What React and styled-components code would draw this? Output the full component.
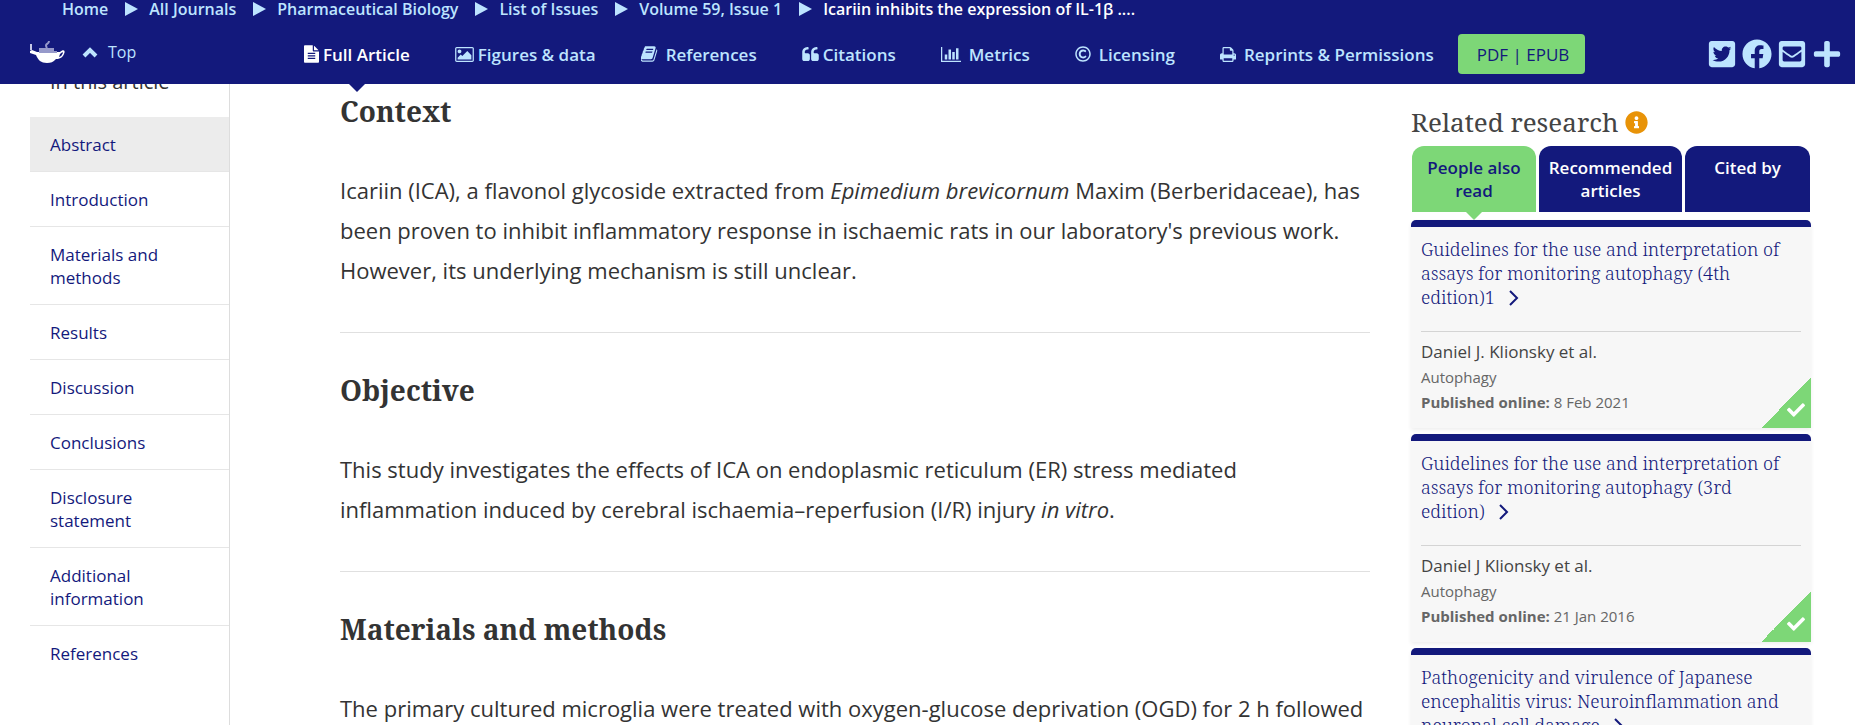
import React from "react";
import styled, { createGlobalStyle } from "styled-components";
import {
  FaRegCopyright,
  FaTwitterSquare,
  FaFacebook,
  FaEnvelopeSquare,
  FaPlus,
  FaInfoCircle,
  FaCheck,
} from "react-icons/fa";

const navy = "#13197c";
const sky = "#bde4ff";
const green = "#7dd777";
const sans = `"Open Sans", "Noto Sans", sans-serif`;
const serif = `"Noto Serif", "Droid Serif", "Liberation Serif", serif`;

const GlobalStyle = createGlobalStyle`
  *, *::before, *::after { box-sizing: border-box; }
  html, body { height: 100%; }
  body {
    margin: 0;
    overflow: hidden;
    background: #fff;
    color: #333;
    font-family: ${sans};
    font-size: 17px;
  }
  #root { height: 100%; }
  a { color: inherit; text-decoration: none; }
  h2, h3, p, ul, ol { margin: 0; padding: 0; }
  ul, ol { list-style: none; }
  button { font: inherit; border: 0; cursor: pointer; }
  svg { display: block; flex: none; }
`;

const Page = styled.div`
  display: flex;
  flex-direction: column;
  height: 100%;
`;

const Header = styled.header`
  flex: none;
  background: ${navy};
  color: ${sky};
`;

const Breadcrumbs = styled.ol`
  display: flex;
  align-items: center;
  padding-left: 62px;
  font-size: 16px;
  font-weight: 600;
  line-height: 18px;
  white-space: nowrap;
`;

const Crumb = styled.li`
  display: flex;
  align-items: center;
  color: ${(p) => (p.$current ? "#fff" : sky)};

  &:not(:first-child)::before {
    content: "";
    margin: 0 11px 0 17px;
    border-left: 13px solid ${sky};
    border-top: 7px solid transparent;
    border-bottom: 7px solid transparent;
  }
`;

const NavBar = styled.div`
  display: flex;
  align-items: center;
  height: 66px;
  padding: 6px 13px 0 29px;
  white-space: nowrap;
`;

const BrandGroup = styled.div`
  display: flex;
  align-items: center;
  gap: 16px;
  width: 275px;
  padding-bottom: 4px;
`;

const TopLink = styled.a`
  display: flex;
  align-items: center;
  gap: 10px;
  font-size: 16px;
`;

const NavList = styled.ul`
  display: flex;
  align-items: center;
  gap: 45px;
  height: 60px;
  font-weight: 600;
`;

const NavLink = styled.a`
  position: relative;
  display: flex;
  align-items: center;
  gap: ${(p) => (p.$tight ? "4px" : "8px")};
  height: 60px;
  color: ${(p) => (p.$active ? "#fff" : sky)};

  &::after {
    content: "";
    display: ${(p) => (p.$active ? "block" : "none")};
    position: absolute;
    left: 50%;
    top: 100%;
    margin-left: -8px;
    border-top: 8px solid ${navy};
    border-left: 8px solid transparent;
    border-right: 8px solid transparent;
  }
`;

const PdfButton = styled.button`
  height: 40px;
  margin-left: 24px;
  padding: 0 16px 0 19px;
  border-radius: 4px;
  background: ${green};
  color: ${navy};
`;

const SocialList = styled.ul`
  display: flex;
  align-items: center;
  gap: 5px;
  margin-left: auto;
  font-size: 30px;
`;

const Body = styled.div`
  flex: 1;
  min-height: 0;
  display: grid;
  grid-template-columns: 230px minmax(0, 1fr) 400px;
  padding-right: 44px;
  overflow: hidden;
`;

const Sidebar = styled.nav`
  margin-left: 30px;
  border-right: 1px solid #ddd;
  overflow: hidden;
`;

const SidebarTitle = styled.h2`
  margin-top: -14px;
  padding: 0 20px;
  font-size: 20px;
  font-weight: 500;
  line-height: 24px;
`;

const SectionList = styled.ul`
  margin-top: 23px;
`;

const SectionItem = styled.li`
  border-bottom: 1px solid #e6e6e6;
  background: ${(p) => (p.$active ? "#ececec" : "transparent")};

  &:last-child { border-bottom: 0; }
`;

const SectionLink = styled.a`
  display: block;
  padding: 16px 20px 15px;
  font-weight: 500;
  line-height: 23px;
  color: ${navy};
`;

const Article = styled.main`
  padding: 0 41px 0 110px;
  overflow: hidden;
`;

const Section = styled.section`
  padding: ${(p) => (p.$first ? "7px" : "37px")} 0 42px;
  border-bottom: 1px solid #e0e0e0;
`;

const SectionHeading = styled.h3`
  font-family: ${serif};
  font-size: 28px;
  font-weight: 700;
  line-height: 40px;
`;

const Paragraph = styled.p`
  margin-top: 39px;
  font-size: 22px;
  font-weight: 400;
  line-height: 40px;
`;

const Related = styled.aside`
  padding-top: 18px;
`;

const RelatedHeading = styled.h2`
  display: flex;
  align-items: center;
  gap: 7px;
  height: 44px;
  padding-bottom: 4px;
  font-family: ${serif};
  font-size: 26px;
  font-weight: 400;
  color: #444;
  white-space: nowrap;

  svg { color: #e89308; font-size: 23px; }
`;

const Tabs = styled.div`
  display: grid;
  grid-template-columns: 124fr 143fr 125fr;
  gap: 3px;
  padding: 0 1px;
`;

const Tab = styled.button`
  position: relative;
  display: flex;
  justify-content: center;
  align-items: flex-start;
  height: 66px;
  padding: 10px 8px;
  border-radius: 12px 12px 0 0;
  background: ${(p) => (p.$active ? green : navy)};
  color: ${(p) => (p.$active ? navy : "#fff")};
  font-weight: 600;
  line-height: 23px;

  &::after {
    content: "";
    display: ${(p) => (p.$active ? "block" : "none")};
    position: absolute;
    left: 50%;
    top: 100%;
    margin-left: -8px;
    border-top: 8px solid ${green};
    border-left: 8px solid transparent;
    border-right: 8px solid transparent;
  }
`;

const CardList = styled.div`
  display: flex;
  flex-direction: column;
  gap: 6px;
  margin-top: 8px;
`;

const Card = styled.article`
  position: relative;
  height: 208px;
  padding: 10px 10px 0;
  border-top: 7px solid ${navy};
  border-radius: 5px 5px 0 0;
  background: #f7f7f7;
  box-shadow: 0 2px 4px #eee;
`;

const CardTitle = styled.h3`
  height: 95px;
  border-bottom: 1px solid #d4d4d4;
  color: ${navy};
  font-family: ${serif};
  font-size: 18px;
  font-weight: 325;
  line-height: 24px;

  svg { display: inline-block; margin-left: 10px; vertical-align: -2px; }
`;

const Author = styled.p`
  margin-top: 6px;
  line-height: 27px;
  color: #444;
`;

const Meta = styled.p`
  font-size: 15px;
  line-height: 25px;
  color: #666;
`;

const Corner = styled.span`
  position: absolute;
  right: 0;
  bottom: 0;
  display: flex;
  align-items: flex-end;
  justify-content: flex-end;
  width: 50px;
  height: 50px;
  padding: 0 6px 9px 0;
  background: linear-gradient(135deg, transparent 50%, ${green} 50%);
  color: #fff;
  font-size: 18px;
`;

const quote =
  "v384q0 80-56 136t-136 56h-384q-80 0-136-56t-56-136v-704q0-104 40.500-198.500t109.500-163.500 163.500-109.500 198.500-40.500h64q26 0 45 19t19 45v128q0 26-19 45t-45 19h-64q-106 0-181 75t-75 181v32q0 40 28 68t68 28h224q80 0 136 56t56 136z";
const textLine = "v-64q0-14-9-23t-23-9h-704q-14 0-23 9t-9 23v64q0 14 9 23t23 9h704q14 0 23-9t9-23z";

const glyphs = {
  file: {
    box: "128 0 1536 1792",
    w: 15,
    h: 18,
    d: `M1596 476q14 14 28 36h-472v-472q22 14 36 28zm-476 164h544v1056q0 40-28 68t-68 28h-1344q-40 0-68-28t-28-68v-1600q0-40 28-68t68-28h800v544q0 40 28 68t68 28zM1280 1376${textLine}M1280 1120${textLine}M1280 864${textLine}`,
  },
  image: {
    box: "-64 128 1920 1536",
    w: 19,
    h: 15,
    d: "M576 576q0 80-56 136t-136 56-136-56-56-136 56-136 136-56 136 56 56 136zm1024 384v448h-1408v-192l320-320 160 160 512-512zm96-704h-1600q-13 0-22.500 9.500t-9.500 22.500v1216q0 13 9.500 22.500t22.500 9.500h1600q13 0 22.500-9.500t9.500-22.500v-1216q0-13-9.500-22.500t-22.500-9.500zm160 32v1216q0 66-47 113t-113 47h-1600q-66 0-113-47t-47-113v-1216q0-66 47-113t113-47h1600q66 0 113 47t47 113z",
  },
  book: {
    box: "56 128 1680 1536",
    w: 17,
    h: 16,
    d: "M1639 478q40 57 18 129l-275 906q-19 64-76.500 107.500t-122.500 43.500h-923q-77 0-148.500-53.500t-99.500-131.500q-24-67-2-127 0-4 3-27t4-37q1-8-3-21.500t-3-19.500q2-11 8-21t16.500-23.500 16.500-23.500q23-38 45-91.500t30-91.500q3-10 .5-30t-.5-28q3-11 17-28t17-23q21-36 42-92t25-90q1-9-2.500-32t.5-28q4-13 22-30.500t22-22.500q19-26 42.500-84.500t27.500-96.500q1-8-3-25.500t-2-26.500q2-8 9-18t18-23 17-21q8-12 16.500-30.500t15-35 16-36 19.500-32 26.500-23.500 36-11.500 47.500 5.500l-1 3q38-9 51-9h761q74 0 114 56t18 130l-274 906q-36 119-71.500 153.500t-128.500 34.500h-869q-27 0-38 15-11 16-1 43 24 70 144 70h923q29 0 56-15.500t35-41.500l300-987q7-22 5-57 38 15 59 43zm-1064 2q-4 13 2 22.500t20 9.500h608q13 0 25.500-9.500t16.500-22.500l21-64q4-13-2-22.500t-20-9.500h-608q-13 0-25.500 9.500t-16.500 22.500zm-83 256q-4 13 2 22.500t20 9.500h608q13 0 25.500-9.500t16.500-22.500l21-64q4-13-2-22.500t-20-9.500h-608q-13 0-25.500 9.500t-16.500 22.500z",
  },
  quote: { box: "64 128 1664 1408", w: 17, h: 14, d: `M832 960${quote}M1728 960${quote}` },
  chart: {
    box: "0 128 2048 1536",
    w: 20,
    h: 15,
    d: "M640 896v512h-256v-512h256zm384-512v1024h-256v-1024h256zm1024 1152v128h-2048v-1536h128v1408h1920zm-640-896v768h-256v-768h256zm384-384v1152h-256v-1152h256z",
  },
  print: {
    box: "64 128 1664 1536",
    w: 16,
    h: 15,
    d: "M448 1536h896v-256h-896v256zm0-640h896v-384h-160q-40 0-68-28t-28-68v-160h-640v640zm1152 64q0-26-19-45t-45-19-45 19-19 45 19 45 45 19 45-19 19-45zm128 0v416q0 13-9.500 22.500t-22.500 9.500h-224v160q0 40-28 68t-68 28h-960q-40 0-68-28t-28-68v-160h-224q-13 0-22.500-9.500t-9.500-22.500v-416q0-79 56.500-135.500t135.500-56.500h64v-544q0-40 28-68t68-28h672q40 0 88 20t76 48l152 152q28 28 48 76t20 88v256h64q79 0 135.500 56.500t56.500 135.500z",
  },
};

function Glyph({ name }) {
  const g = glyphs[name];
  return (
    <svg width={g.w} height={g.h} viewBox={g.box} fill="currentColor" aria-hidden="true">
      <path d={g.d} />
    </svg>
  );
}

function Lamp() {
  return (
    <svg width="37" height="24" viewBox="0 0 37 24" aria-hidden="true">
      <path d="M1 11L3 10L8 12H31C34 9 37 10 35 14C34 17 31 19 27 19C24 22 22 23 18 23C12 23 9 20 7 15L1 13Z" fill="#fff" />
      <path d="M31 14Q34 11 34 13Q33 16 30 17Z" fill={navy} />
      <path d="M10 8H25V11H28V13H10Z" fill="#9699ca" />
      <path d="M2 4V10" stroke="#c7c9e6" strokeWidth="2" />
      <path d="M18 8Q16 5 18 4Q20 3 20 1" fill="none" stroke="#9699ca" strokeWidth="2" />
    </svg>
  );
}

function ChevronUp() {
  return (
    <svg width="16" height="12" viewBox="0 0 16 12" fill="none" stroke="currentColor" strokeWidth="4" aria-hidden="true">
      <path d="M2 10L8 4L14 10" />
    </svg>
  );
}

function Arrow() {
  return (
    <svg width="10" height="16" viewBox="0 0 10 16" fill="none" stroke={navy} strokeWidth="2" aria-hidden="true">
      <path d="M1 1L8 8L1 15" />
    </svg>
  );
}

const crumbs = ["Home", "All Journals", "Pharmaceutical Biology", "List of Issues", "Volume 59, Issue 1", "Icariin inhibits the expression of IL-1β ...."];

const navItems = [
  { label: "Full Article", icon: <Glyph name="file" />, tight: true, active: true },
  { label: "Figures & data", icon: <Glyph name="image" />, tight: true },
  { label: "References", icon: <Glyph name="book" /> },
  { label: "Citations", icon: <Glyph name="quote" />, tight: true },
  { label: "Metrics", icon: <Glyph name="chart" /> },
  { label: "Licensing", icon: <FaRegCopyright size={16} /> },
  { label: "Reprints & Permissions", icon: <Glyph name="print" /> },
];

const socials = [
  ["Twitter", FaTwitterSquare],
  ["Facebook", FaFacebook],
  ["Email", FaEnvelopeSquare],
  ["More", FaPlus],
];

const sections = ["Abstract", "Introduction", "Materials and methods", "Results", "Discussion", "Conclusions", "Disclosure statement", "Additional information", "References"];

const cards = [
  { title: "Guidelines for the use and interpretation of assays for monitoring autophagy (4th edition)1", author: "Daniel J. Klionsky et al.", date: "8 Feb 2021" },
  { title: "Guidelines for the use and interpretation of assays for monitoring autophagy (3rd edition)", author: "Daniel J Klionsky et al.", date: "21 Jan 2016" },
  { title: "Pathogenicity and virulence of Japanese encephalitis virus: Neuroinflammation and neuronal cell damage" },
];

export default function App() {
  return (
    <Page>
      <GlobalStyle />
      <Header>
        <Breadcrumbs aria-label="Breadcrumb">
          {crumbs.map((c, i) => (
            <Crumb key={c} $current={i === crumbs.length - 1}>
              {i === crumbs.length - 1 ? <span>{c}</span> : <a href="#">{c}</a>}
            </Crumb>
          ))}
        </Breadcrumbs>
        <NavBar>
          <BrandGroup>
            <a href="#" aria-label="Journal home"><Lamp /></a>
            <TopLink href="#"><ChevronUp />Top</TopLink>
          </BrandGroup>
          <NavList>
            {navItems.map((n) => (
              <li key={n.label}>
                <NavLink href="#" $active={n.active} $tight={n.tight}>{n.icon}{n.label}</NavLink>
              </li>
            ))}
          </NavList>
          <PdfButton type="button">PDF | EPUB</PdfButton>
          <SocialList>
            {socials.map(([label, Icon]) => (
              <li key={label}><a href="#" aria-label={label}><Icon /></a></li>
            ))}
          </SocialList>
        </NavBar>
      </Header>
      <Body>
        <Sidebar aria-label="In this article">
          <SidebarTitle>In this article</SidebarTitle>
          <SectionList>
            {sections.map((s, i) => (
              <SectionItem key={s} $active={i === 0}><SectionLink href="#">{s}</SectionLink></SectionItem>
            ))}
          </SectionList>
        </Sidebar>
        <Article>
          <Section $first>
            <SectionHeading>Context</SectionHeading>
            <Paragraph>
              Icariin (ICA), a flavonol glycoside extracted from <em>Epimedium brevicornum</em> Maxim (Berberidaceae), has been proven to inhibit inflammatory response in ischaemic rats in our laboratory's previous work. However, its underlying mechanism is still unclear.
            </Paragraph>
          </Section>
          <Section>
            <SectionHeading>Objective</SectionHeading>
            <Paragraph>
              This study investigates the effects of ICA on endoplasmic reticulum (ER) stress mediated inflammation induced by cerebral ischaemia–reperfusion (I/R) injury <em>in vitro</em>.
            </Paragraph>
          </Section>
          <Section>
            <SectionHeading>Materials and methods</SectionHeading>
            <Paragraph>The primary cultured microglia were treated with oxygen-glucose deprivation (OGD) for 2 h followed</Paragraph>
          </Section>
        </Article>
        <Related>
          <RelatedHeading>Related research <FaInfoCircle /></RelatedHeading>
          <Tabs role="tablist">
            <Tab type="button" role="tab" aria-selected="true" $active>People also read</Tab>
            <Tab type="button" role="tab" aria-selected="false">Recommended articles</Tab>
            <Tab type="button" role="tab" aria-selected="false">Cited by</Tab>
          </Tabs>
          <CardList>
            {cards.map((c) => (
              <Card key={c.title}>
                <CardTitle><a href="#">{c.title}{"\u00a0"}<Arrow /></a></CardTitle>
                {c.author && (
                  <>
                    <Author>{c.author}</Author>
                    <Meta>Autophagy</Meta>
                    <Meta><strong>Published online:</strong> {c.date}</Meta>
                    <Corner><FaCheck /></Corner>
                  </>
                )}
              </Card>
            ))}
          </CardList>
        </Related>
      </Body>
    </Page>
  );
}
